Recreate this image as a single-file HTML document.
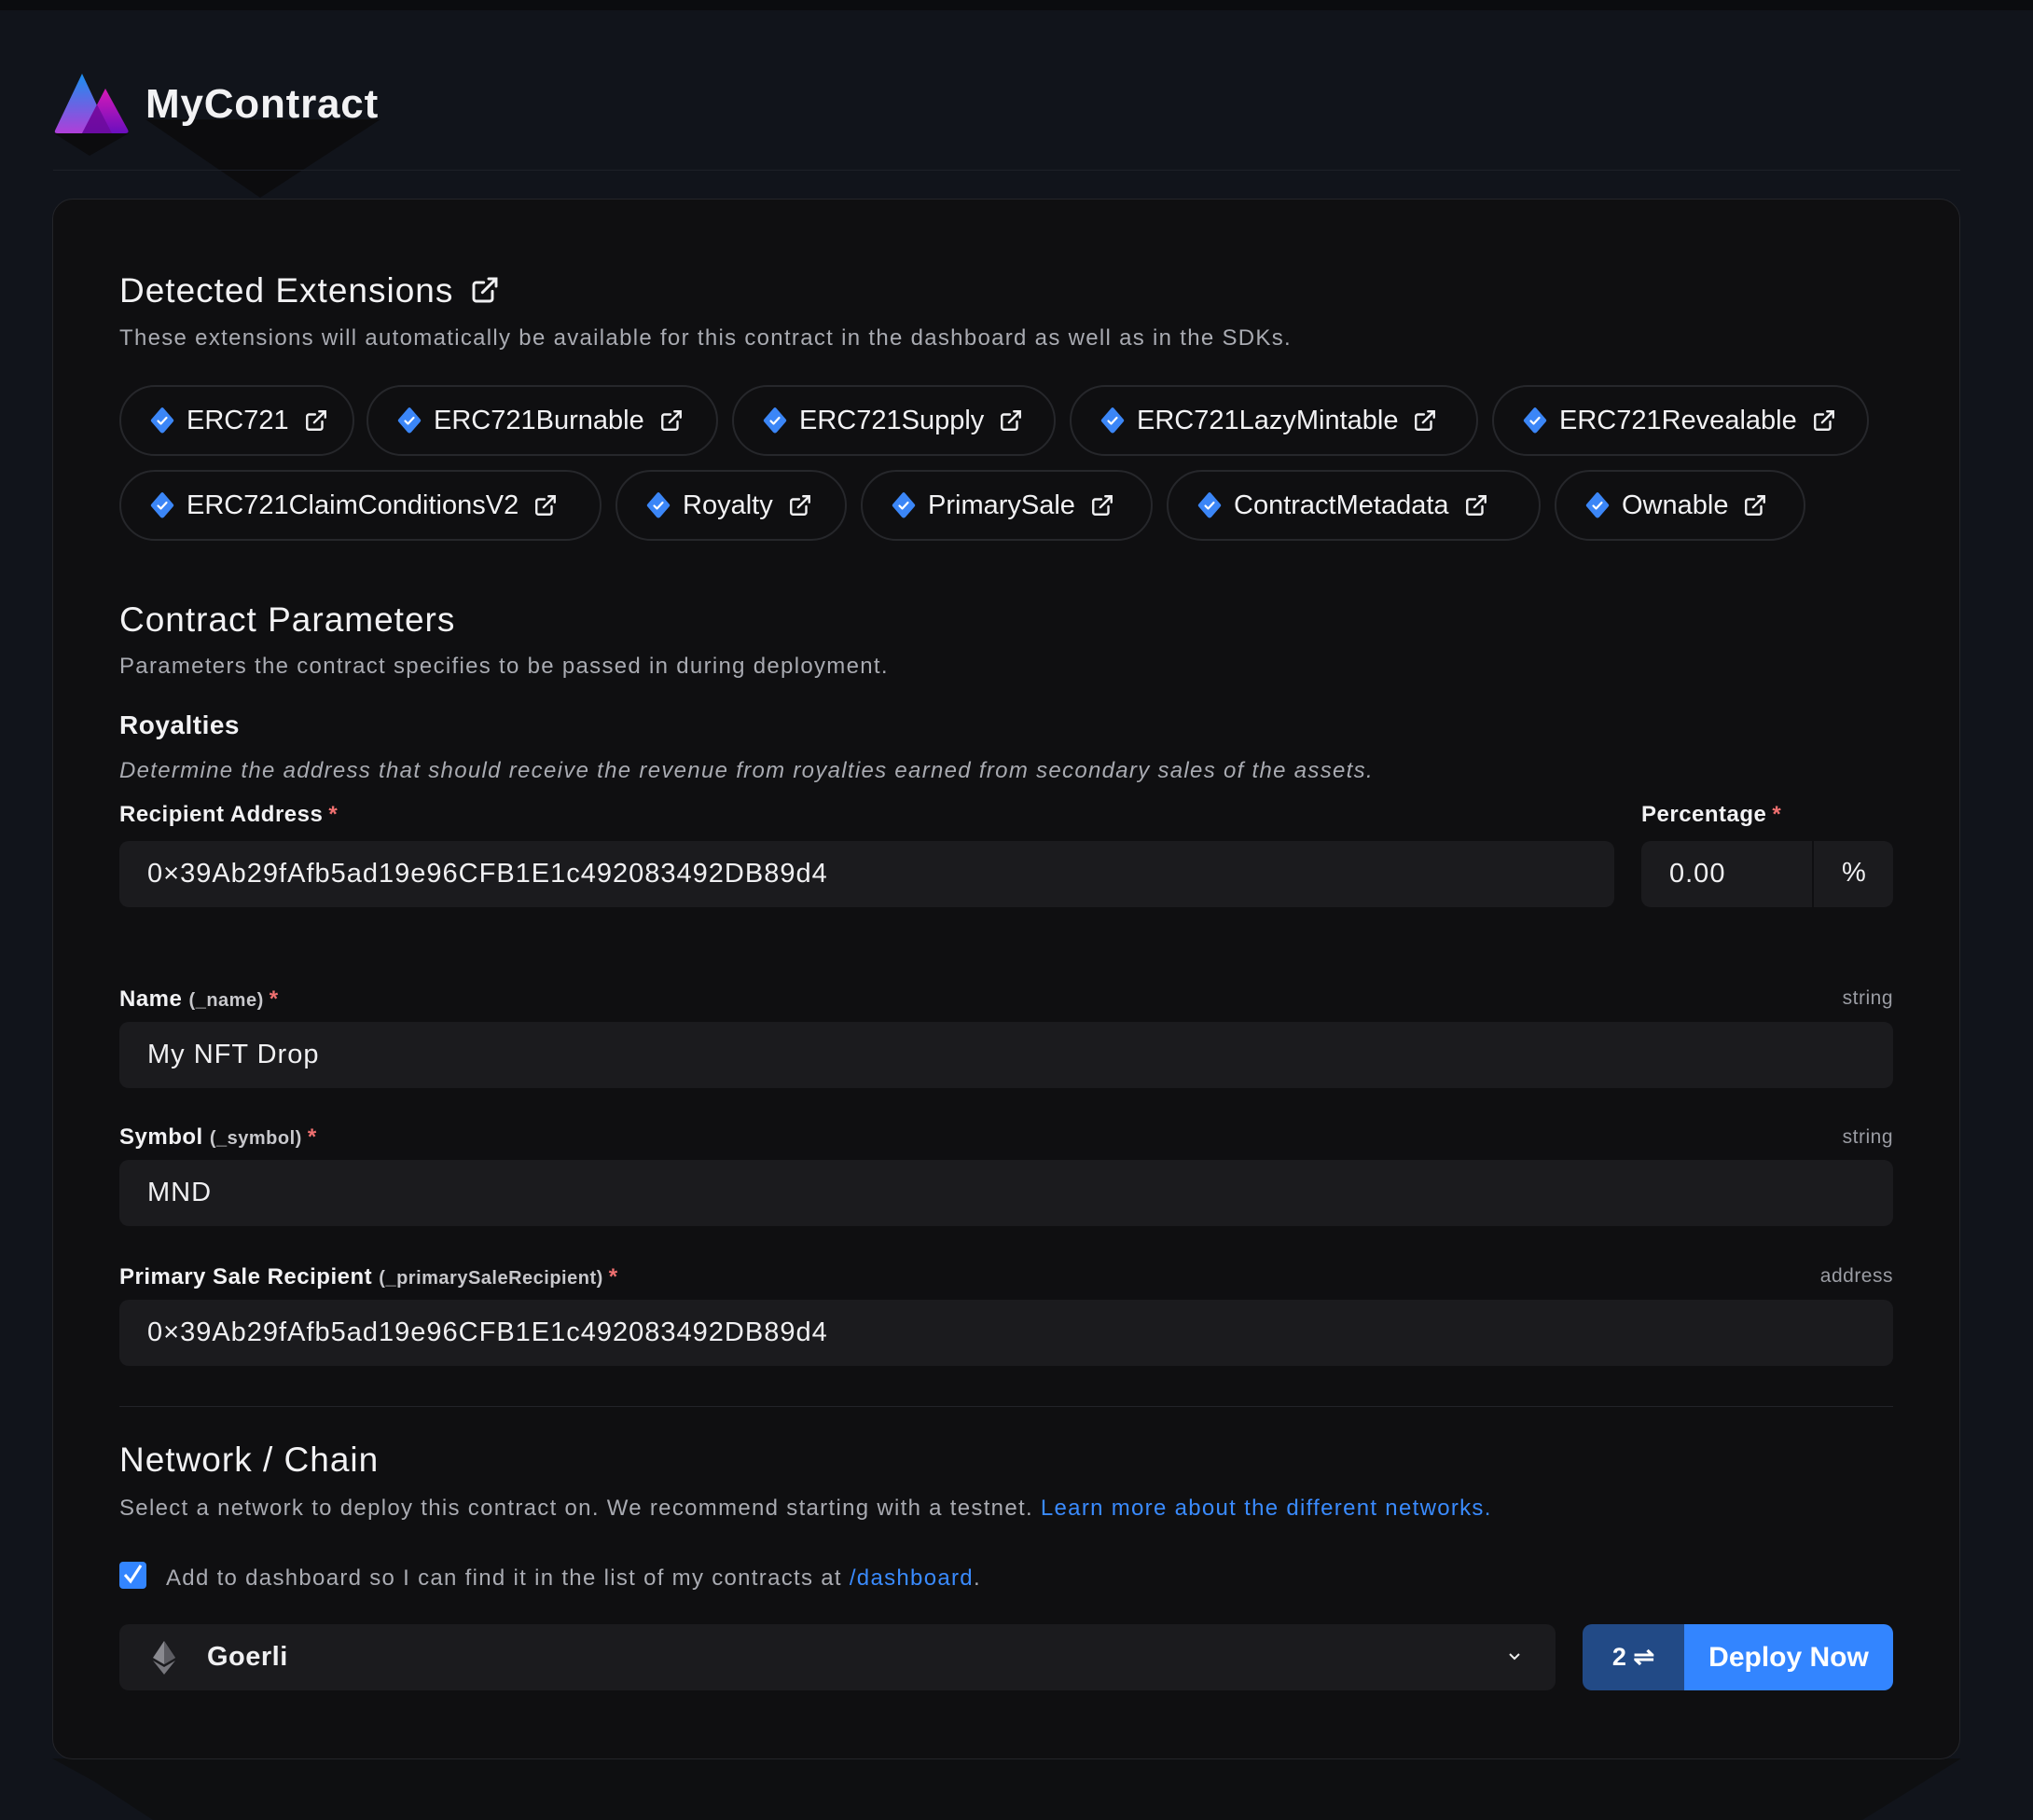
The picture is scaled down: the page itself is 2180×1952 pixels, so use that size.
<!DOCTYPE html>
<html><head><meta charset="utf-8">
<style>
*{box-sizing:border-box;margin:0;padding:0}
body{width:2180px;height:1952px;background:#11141b;font-family:"Liberation Sans",sans-serif;color:#f0f0f2;position:relative;overflow:hidden}
.a{position:absolute}
.card{left:56px;top:213px;width:2046px;height:1674px;background:#0f0f11;border:1px solid #24252a;border-radius:22px}
.h2{font-size:37px;color:#f2f2f4;white-space:nowrap;letter-spacing:1px}
.desc{font-size:24px;color:#a9abb2;white-space:nowrap;letter-spacing:1.3px}
.chip{position:absolute;height:76px;border:2px solid #26272b;border-radius:38px;display:flex;align-items:center;padding-left:30px;font-size:29px;white-space:nowrap;color:#f2f2f4}
.dia{margin:0 12px 0 0;flex:none}
.ext{margin-left:16px;flex:none}
.lbl{font-size:24px;font-weight:bold;color:#f2f2f4;white-space:nowrap;letter-spacing:.5px}
.lbl small{font-size:20px;color:#c8c8cc;font-weight:bold}
.lbl i{color:#f07070;font-style:normal;margin-left:6px}
.typ{font-size:21px;color:#9a9ca3;text-align:right;letter-spacing:.5px}
.inp{background:#1b1b1e;border-radius:10px;font-size:29px;color:#f0f0f2;display:flex;align-items:center;padding-left:30px;white-space:nowrap;letter-spacing:1px}
</style></head><body>
<div class="a" style="left:0;top:0;width:2180px;height:11px;background:#0b0c0f"></div>
<svg class="a" style="left:0;top:0" width="2180" height="1952">
<polygon points="156,128 408,128 279,212" fill="#0c0c0e"/>
<polygon points="58,143 138,143 96,167" fill="#0c0c0e"/>
<polygon points="56,1886 2103,1886 1997,1952 164,1952 100,1910" fill="#0e0f11"/>
<defs>
<linearGradient id="g1" x1="0" y1="0" x2="0" y2="1"><stop offset="0" stop-color="#1a8ff0"/><stop offset="1" stop-color="#b03ed8"/></linearGradient>
<linearGradient id="g2" x1="0" y1="0" x2="0" y2="1"><stop offset="0" stop-color="#d81ab8"/><stop offset="1" stop-color="#6a0fbe"/></linearGradient>
</defs>
<path d="M88,79 L59,140 Q58,143 62,143 L118,143 Z" fill="url(#g1)"/>
<path d="M113,95 L88,143 L134,143 Q139,143 137,139 Z" fill="url(#g2)"/>
<path d="M104,112 L88,143 L120,143 Z" fill="#6a0a9a" opacity=".8"/>
<line x1="57" y1="182.5" x2="2102" y2="182.5" stroke="#1d2028" stroke-width="1"/>
</svg>
<div class="a" style="left:156px;top:87px;font-size:44px;font-weight:bold;color:#f2f2f4;letter-spacing:.8px">MyContract</div>
<div class="a card"></div>

<div class="a h2" style="left:128px;top:291px">Detected Extensions <svg width="32" height="32" viewBox="0 0 24 24" style="vertical-align:-3px;margin-left:6px" fill="none" stroke="#f0f0f2" stroke-width="2.2" stroke-linecap="round"><path d="M18 13v6a2 2 0 0 1-2 2H5a2 2 0 0 1-2-2V8a2 2 0 0 1 2-2h6M15 3h6v6M10 14L21 3"/></svg></div>
<div class="a desc" style="left:128px;top:349px">These extensions will automatically be available for this contract in the dashboard as well as in the SDKs.</div>

<div id="chips"></div>
<script>
var D='<svg class="dia" width="28" height="32" viewBox="0 0 28 32"><path d="M14 2 Q15 2 16 3.5 L25.5 14.5 Q27 16 25.5 17.5 L16 28.5 Q14 30.5 12 28.5 L2.5 17.5 Q1 16 2.5 14.5 L12 3.5 Q13 2 14 2Z" fill="#3b86f7"/><path d="M9.5 16.5l3 3 6-6.5" stroke="#fff" stroke-width="2.2" fill="none" stroke-linecap="round" stroke-linejoin="round"/></svg>';
var E='<svg class="ext" width="26" height="26" viewBox="0 0 24 24" fill="none" stroke="#f0f0f2" stroke-width="2.2" stroke-linecap="round"><path d="M18 13v6a2 2 0 0 1-2 2H5a2 2 0 0 1-2-2V8a2 2 0 0 1 2-2h6M15 3h6v6M10 14L21 3"/></svg>';
var c=[[128,413,252,"ERC721"],[393,413,377,"ERC721Burnable"],[785,413,347,"ERC721Supply"],[1147,413,438,"ERC721LazyMintable"],[1600,413,404,"ERC721Revealable"],
[128,504,517,"ERC721ClaimConditionsV2"],[660,504,248,"Royalty"],[923,504,313,"PrimarySale"],[1251,504,401,"ContractMetadata"],[1667,504,269,"Ownable"]];
var h='';c.forEach(function(x){h+='<div class="chip" style="left:'+x[0]+'px;top:'+x[1]+'px;width:'+x[2]+'px">'+D+x[3]+E+'</div>'});
document.getElementById('chips').innerHTML=h;
</script>

<div class="a h2" style="left:128px;top:644px">Contract Parameters</div>
<div class="a desc" style="left:128px;top:701px">Parameters the contract specifies to be passed in during deployment.</div>
<div class="a lbl" style="left:128px;top:762px;font-size:28px">Royalties</div>
<div class="a desc" style="left:128px;top:813px;font-style:italic">Determine the address that should receive the revenue from royalties earned from secondary sales of the assets.</div>
<div class="a lbl" style="left:128px;top:860px">Recipient Address<i>*</i></div>
<div class="a lbl" style="left:1760px;top:860px">Percentage<i>*</i></div>
<div class="a inp" style="left:128px;top:902px;width:1603px;height:71px">0×39Ab29fAfb5ad19e96CFB1E1c492083492DB89d4</div>
<div class="a inp" style="left:1760px;top:902px;width:270px;height:71px">0.00</div>
<div class="a" style="left:1943px;top:902px;width:2px;height:71px;background:#0f0f11"></div>
<div class="a" style="left:1975px;top:920px;font-size:29px">%</div>

<div class="a lbl" style="left:128px;top:1058px">Name <small>(_name)</small><i>*</i></div>
<div class="a typ" style="left:1800px;top:1059px;width:230px">string</div>
<div class="a inp" style="left:128px;top:1096px;width:1902px;height:71px">My NFT Drop</div>
<div class="a lbl" style="left:128px;top:1206px">Symbol <small>(_symbol)</small><i>*</i></div>
<div class="a typ" style="left:1800px;top:1208px;width:230px">string</div>
<div class="a inp" style="left:128px;top:1244px;width:1902px;height:71px">MND</div>
<div class="a lbl" style="left:128px;top:1356px">Primary Sale Recipient <small>(_primarySaleRecipient)</small><i>*</i></div>
<div class="a typ" style="left:1800px;top:1357px;width:230px">address</div>
<div class="a inp" style="left:128px;top:1394px;width:1902px;height:71px">0×39Ab29fAfb5ad19e96CFB1E1c492083492DB89d4</div>
<div class="a" style="left:128px;top:1508px;width:1902px;height:1px;background:#222328"></div>

<div class="a h2" style="left:128px;top:1545px">Network / Chain</div>
<div class="a desc" style="left:128px;top:1604px">Select a network to deploy this contract on. We recommend starting with a testnet. <span style="color:#3a8bff">Learn more about the different networks.</span></div>
<div class="a" style="left:128px;top:1675px;width:29px;height:29px;background:#3385ff;border-radius:4px"><svg width="29" height="29" viewBox="0 0 29 29"><path d="M6 14l6 7 11-17" stroke="#fff" stroke-width="3" fill="none"/></svg></div>
<div class="a desc" style="left:178px;top:1679px">Add to dashboard so I can find it in the list of my contracts at <span style="color:#3a8bff">/dashboard</span>.</div>

<div class="a inp" style="left:128px;top:1742px;width:1540px;height:71px;padding-left:36px;letter-spacing:.5px">
<svg width="24" height="36" viewBox="0 0 24 36"><path d="M12 0L0 18l12 7 12-7z" fill="#8a8a90"/><path d="M12 0v25l12-7z" fill="#5c5c62"/><path d="M0 21l12 15 12-15-12 7z" fill="#77777d"/></svg>
<span style="margin-left:34px;font-weight:bold">Goerli</span>
<svg class="a" style="left:1488px;top:29px" width="16" height="12" viewBox="0 0 16 12"><path d="M3 3l5 5 5-5" stroke="#eee" stroke-width="2" fill="none"/></svg>
</div>
<div class="a" style="left:1697px;top:1742px;width:333px;height:71px;border-radius:10px;overflow:hidden;display:flex">
<div style="width:109px;background:#224a86;color:#fff;font-size:27px;font-weight:bold;display:flex;align-items:center;justify-content:center">2 ⇌</div>
<div style="flex:1;background:#3385ff;color:#fff;font-size:30px;font-weight:bold;display:flex;align-items:center;justify-content:center">Deploy Now</div>
</div>
</body></html>
